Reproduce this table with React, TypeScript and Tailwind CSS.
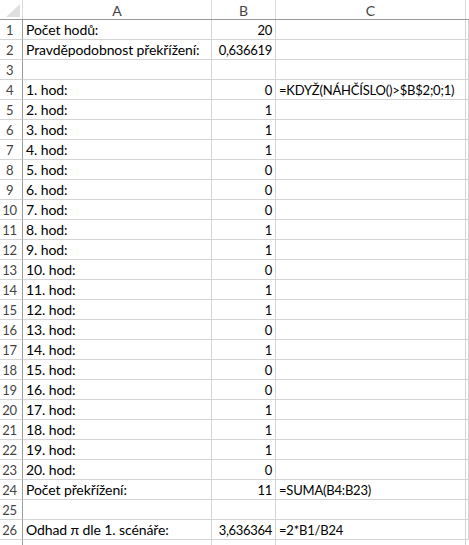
const hody = [0, 1, 1, 1, 0, 0, 0, 1, 1, 0, 1, 1, 0, 1, 0, 0, 1, 1, 1, 0]

type Row = [string, string, string]

const rows: Row[] = [
  ['Počet hodů:', '20', ''],
  ['Pravděpodobnost překřížení:', '0,636619', ''],
  ['', '', ''],
  ...hody.map(
    (v, i): Row => [`${i + 1}. hod:`, String(v), i === 0 ? '=KDYŽ(NÁHČÍSLO()>$B$2;0;1)' : '']
  ),
  ['Počet překřížení:', '11', '=SUMA(B4:B23)'],
  ['', '', ''],
  ['Odhad π dle 1. scénáře:', '3,636364', '=2*B1/B24'],
]

const cols = 'grid grid-cols-[23px_189px_64px_190px_1fr]'
const cell = 'h-5 border-r border-b border-[#d4d4d4] flex items-end leading-[18px] whitespace-nowrap'

export default function App() {
  return (
    <div className="w-[469px] h-[545px] overflow-hidden bg-white text-black font-['Lato',sans-serif] text-[13px]">
      <div className={`${cols} h-5 border-b border-[#9b9b9b]`}>
        <div className="relative border-r border-[#dadada] h-[19px]">
          <svg className="absolute left-[6px] top-[4px]" width="14" height="13" viewBox="0 0 14 13">
            <polygon points="14,0 14,13 0,13" fill="#dfdfdf" />
          </svg>
        </div>
        {['A', 'B', 'C'].map((h) => (
          <div key={h} className="h-[19px] border-r border-[#dadada] flex items-center justify-center text-[#444] text-[14px] pt-[1px]">
            {h}
          </div>
        ))}
        <div />
      </div>
      {rows.map((r, i) => (
        <div key={i} className={cols}>
          <div className="h-5 border-r border-b border-r-[#9b9b9b] border-b-[#d4d4d4] flex items-end justify-center pr-[3px] leading-[18px] text-[#444] tracking-[-0.3px]">
            {i + 1}
          </div>
          <div className={`${cell} pl-[3px] text-[14px] tracking-[-0.1px]`}>{r[0]}</div>
          <div className={`${cell} justify-end pr-[3px] tracking-[-0.3px]`}>{r[1]}</div>
          <div className={`${cell} pl-[3px] tracking-[-0.2px]`}>{r[2]}</div>
          <div className={cell} />
        </div>
      ))}
      <div className={cols}>
        <div className="h-5 border-r border-[#9b9b9b]" />
        <div className="h-5 border-r border-[#d4d4d4]" />
        <div className="h-5 border-r border-[#d4d4d4]" />
        <div className="h-5 border-r border-[#d4d4d4]" />
        <div />
      </div>
    </div>
  )
}
